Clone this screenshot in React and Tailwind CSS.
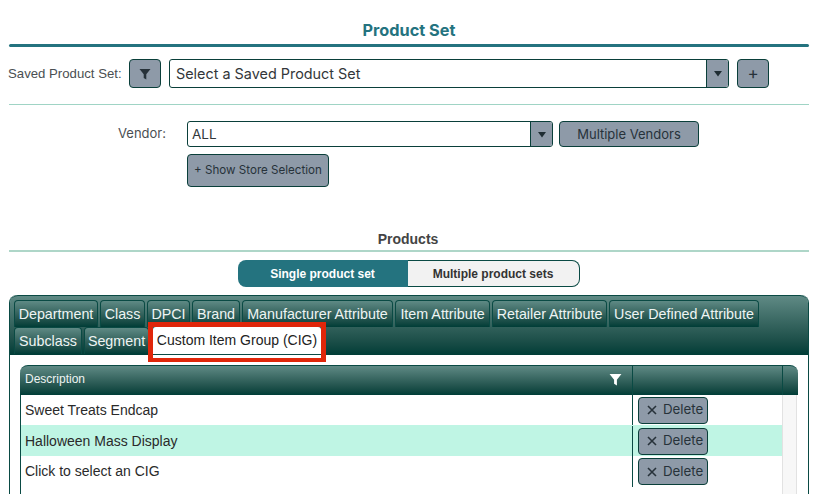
import React from "react";

const arial = "font-['Liberation_Sans',Arial,sans-serif]";
const inter = "font-['Inter',sans-serif]";
const gradient = "bg-gradient-to-b from-[#5f8a85] to-[#003d37]";
const grayBtn = "bg-[#8e9aa8] border border-[#0a3f3a] rounded-[4px] text-[#27323a]";

const firstRowTabs = [
  { label: "Department", width: "w-[84px]" },
  { label: "Class", width: "w-[45px]" },
  { label: "DPCI", width: "w-[43px]" },
  { label: "Brand", width: "w-[48px]" },
  { label: "Manufacturer Attribute", width: "w-[151px]" },
  { label: "Item Attribute", width: "w-[95px]" },
  { label: "Retailer Attribute", width: "w-[115px]" },
  { label: "User Defined Attribute", width: "w-[150px]" },
];

const rows = [
  { name: "Sweet Treats Endcap", bg: "bg-white", height: "h-[30px]" },
  { name: "Halloween Mass Display", bg: "bg-[#bff5e4]", height: "h-[31px] pt-[1px]" },
  { name: "Click to select an CIG", bg: "bg-white", height: "h-[31px]" },
];

function Funnel({ className }) {
  return (
    <svg viewBox="0 0 12 12" className={className} fill="currentColor">
      <path d="M0.5 1h11L7.3 6.2V11.5L4.7 10V6.2z" />
    </svg>
  );
}

function Arrow() {
  return (
    <svg viewBox="0 0 10 7" className="w-[10px] h-[7px] text-[#1f2d33]" fill="currentColor">
      <path d="M1 1h8L5 6.5z" />
    </svg>
  );
}

function Tab({ label, width }) {
  return (
    <div
      className={`${width} h-[27px] pt-[1px] shrink-0 flex items-center justify-center rounded-t-[4px] border-t border-x border-[#0a4a44] ${gradient} text-[14.3px] text-[#eef4f3] whitespace-nowrap`}
    >
      {label}
    </div>
  );
}

function App() {
  return (
    <div className={`w-[816px] h-[494px] overflow-hidden bg-white ${inter} text-[#2b2f33]`}>
      {/* Product set heading */}
      <div className="ml-[9px] mr-[7px] pt-[21px]">
        <h1 className="h-[23px] text-center text-[16.3px] leading-[19px] font-bold text-[#24737f]">Product Set</h1>
        <div className="h-[3px] rounded-full bg-[#24737f]" />
      </div>

      {/* Saved product set */}
      <div className="flex items-center h-[29px] mt-[12px] ml-[8px]">
        <span className={`w-[121px] text-[13.2px] text-[#4a4f52] ${arial}`}>Saved Product Set:</span>
        <button className={`${grayBtn} w-[32px] h-[29px] flex items-center justify-center`}>
          <Funnel className="w-[12px] h-[12px] text-[#27323a]" />
        </button>
        <div className="ml-[8px] w-[560px] h-[29px] flex border border-[#0a3f3a] rounded-[3px] overflow-hidden">
          <div className="flex-1 pl-[6px] flex items-center text-[14.4px] text-[#33373a]">Select a Saved Product Set</div>
          <div className="w-[22px] bg-[#8e9aa8] border-l border-[#0a3f3a] flex items-center justify-center">
            <Arrow />
          </div>
        </div>
        <button className={`${grayBtn} ml-[8px] w-[32px] h-[29px] text-[17px] leading-none flex items-center justify-center`}>+</button>
      </div>

      <div className="ml-[9px] mr-[7px] mt-[16px] h-px bg-[#a0d4c5]" />

      {/* Vendor */}
      <div className="flex mt-[16px]">
        <div className="w-[166px] h-[26px] flex items-center justify-end text-[13px] text-[#4a4f52]">Vendor:</div>
        <div className="ml-[21px]">
          <div className="flex gap-[6px]">
            <div className="w-[366px] h-[26px] flex border border-[#0a3f3a] rounded-[3px] overflow-hidden">
              <div className="flex-1 pl-[4px] pt-[1px] flex items-center text-[13.5px] text-[#33373a]">ALL</div>
              <div className="w-[22px] bg-[#8e9aa8] border-l border-[#0a3f3a] flex items-center justify-center">
                <Arrow />
              </div>
            </div>
            <button className={`${grayBtn} w-[140px] h-[26px] pt-[1px] text-[13px]`}>Multiple Vendors</button>
          </div>
          <button className={`${grayBtn} mt-[7px] w-[142px] h-[33px] text-[11.6px]`}>+ Show Store Selection</button>
        </div>
      </div>

      {/* Products */}
      <h2 className={`mt-[44px] h-[16px] text-center text-[14px] leading-[16px] font-bold text-[#444] ${arial}`}>Products</h2>
      <div className="ml-[9px] mr-[7px] mt-[3px] h-[2px] bg-[#aed6c8]" />

      <div className={`flex justify-center pl-[1px] mt-[8px] text-[12px] font-bold ${arial}`}>
        <div className="w-[170px] h-[27px] rounded-l-[8px] bg-[#24737f] text-white flex items-center justify-center">Single product set</div>
        <div className="w-[172px] h-[27px] rounded-r-[8px] bg-[#f2f2f2] border-y border-r border-[#0a4a44] text-[#333] flex items-center justify-center">Multiple product sets</div>
      </div>

      {/* Tab panel */}
      <div className={`relative ml-[9px] mr-[7px] mt-[8px] border-x border-[#0a4a44] rounded-t-[8px] ${arial}`}>
        <div className={`h-[60px] rounded-t-[8px] border-t border-[#0a4a44] ${gradient} pl-[4px] pt-[4px]`}>
          <div className="flex gap-[2px]">
            {firstRowTabs.map((tab) => (
              <Tab key={tab.label} label={tab.label} width={tab.width} />
            ))}
          </div>
          <div className="flex gap-[2px] items-start">
            <Tab label="Subclass" width="w-[68px]" />
            <Tab label="Segment" width="w-[65px]" />
            <div className="ml-[2px] w-[168px] h-[28px] bg-white rounded-t-[3px] border-b border-[#0a4a44] flex items-center justify-center text-[14px] text-[#222]">
              Custom Item Group (CIG)
            </div>
          </div>
        </div>

        {/* Highlight around the active tab */}
        <div className="absolute left-[138px] top-[27px] w-[178px] h-[40px] border-[5px] border-b-[4px] border-[#e0260a]" />

        {/* Grid */}
        <div className="mt-[10px] mx-[10px] w-[778px]">
          <div className={`h-[30px] flex rounded-t-[8px] border-t border-[#0a4a44] ${gradient} text-[12px] text-[#eef4f3]`}>
            <div className="w-[612px] pl-[5px] pr-[10px] pb-[3px] flex items-center justify-between">
              <span>Description</span>
              <Funnel className="w-[13px] h-[13px] text-white" />
            </div>
            <div className="w-[150px] border-l border-[#0a4a44]" />
            <div className="flex-1 border-l border-[#0a4a44]" />
          </div>
          <div className="flex border-l border-[#0a4a44]">
            <div className="w-[761px]">
              {rows.map((row) => (
                <div key={row.name} className={`flex ${row.height} ${row.bg}`}>
                  <div className="w-[611px] pl-[4px] flex items-center text-[14px] text-[#2a2a2a]">{row.name}</div>
                  <div className="flex-1 border-l border-[#0a4a44] pl-[5px] flex items-center">
                    <button className={`${grayBtn} ${inter} w-[70px] h-[27px] pl-[8px] text-[13.3px] flex items-center gap-[6px]`}>
                      <svg viewBox="0 0 10 10" className="w-[10px] h-[10px]" stroke="currentColor" strokeWidth="1.6" fill="none">
                        <path d="M1 1l8 8M9 1l-8 8" />
                      </svg>
                      Delete
                    </button>
                  </div>
                </div>
              ))}
              <div className="h-[8px]" />
            </div>
            <div className="w-[15px] bg-[#f7f7f7] border-l border-[#e2e2e2] border-r" />
          </div>
        </div>
      </div>
    </div>
  );
}

export default App;
